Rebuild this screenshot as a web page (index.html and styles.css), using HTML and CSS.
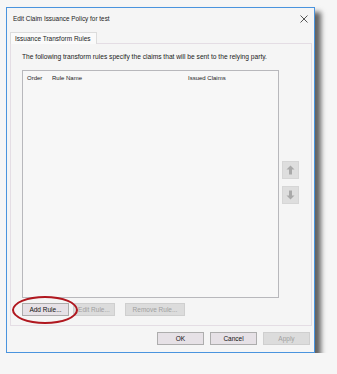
FILE: index.html
```html
<!DOCTYPE html>
<html>
<head>
    <meta charset="UTF-8">
    <title>Edit Claim Issuance Policy</title>
    <link rel="stylesheet" href="styles.css">
</head>
<body>
<div class="dialog">
    <div class="titlebar">
        <span class="title">Edit Claim Issuance Policy for test</span>
        <svg class="close" width="8" height="8" viewBox="0 0 8 8">
            <path d="M0.5 0.5 L7.5 7.5 M7.5 0.5 L0.5 7.5" stroke="#444" stroke-width="0.9"/>
        </svg>
    </div>
    <div class="tabs">
        <div class="tab">Issuance Transform Rules</div>
    </div>
    <div class="panel">
        <p class="intro">The following transform rules specify the claims that will be sent to the relying party.</p>
        <div class="rules">
            <div class="list">
                <div class="cols">
                    <span class="col-order">Order</span>
                    <span class="col-name">Rule Name</span>
                    <span class="col-claims">Issued Claims</span>
                </div>
            </div>
            <div class="arrows">
                <button class="arrow" disabled>
                    <svg width="9" height="10" viewBox="0 0 9 10"><path d="M4.5 0.5 L8.5 4.5 L6 4.5 L6 9.5 L3 9.5 L3 4.5 L0.5 4.5 Z" fill="#a9a9a9"/></svg>
                </button>
                <button class="arrow" disabled>
                    <svg width="9" height="10" viewBox="0 0 9 10"><path d="M4.5 9.5 L8.5 5.5 L6 5.5 L6 0.5 L3 0.5 L3 5.5 L0.5 5.5 Z" fill="#a9a9a9"/></svg>
                </button>
            </div>
        </div>
        <div class="rule-buttons">
            <button class="btn btn-add">Add Rule...</button>
            <button class="btn btn-edit" disabled>Edit Rule...</button>
            <button class="btn btn-remove" disabled>Remove Rule...</button>
        </div>
    </div>
    <div class="footer">
        <button class="btn btn-main">OK</button>
        <button class="btn btn-main">Cancel</button>
        <button class="btn btn-main" disabled>Apply</button>
    </div>
</div>
</body>
</html>
```

FILE: styles.css
```css
body {
    margin: 0;
    background: #f6f6f6;
    font-family: "Liberation Sans", Arial, sans-serif;
    font-size: 7px;
    color: #1a1a1a;
}

.dialog {
    margin: 7px 0 0 6px;
    width: 307px;
    height: 344px;
    border: 1px solid #4a94de;
    background: #f5f5f5;
    box-shadow: 6px 5px 5px rgba(0, 0, 0, 0.6);
    display: flex;
    flex-direction: column;
}

.titlebar {
    height: 21px;
    display: flex;
    align-items: center;
    justify-content: space-between;
    padding: 0 6px 0 6px;
}

.title {
    font-size: 6.4px;
    color: #222;
}

.tabs {
    display: flex;
    padding: 2px 0 0 3px;
}

.tab {
    height: 11px;
    line-height: 11px;
    padding: 0 5px 0 4px;
    border: 1px solid #dcdcdc;
    border-bottom: none;
    background: #fafafa;
    font-size: 6.5px;
    position: relative;
    top: 1px;
}

.panel {
    box-sizing: border-box;
    margin: 0 2px 0 3px;
    height: 283px;
    border: 1px solid #e4dde4;
    padding: 9px 0 0 11px;
    display: flex;
    flex-direction: column;
}

.intro {
    margin: 0;
    font-size: 6.65px;
    line-height: 8px;
}

.rules {
    display: flex;
    margin-top: 9px;
}

.list {
    width: 255px;
    height: 226px;
    border: 1px solid #b8b8bc;
    background: #f7f7f7;
}

.cols {
    display: flex;
    padding: 4px 0 0 4px;
    font-size: 6px;
}

.col-order {
    width: 25px;
}

.col-name {
    width: 136px;
}

.arrows {
    display: flex;
    flex-direction: column;
    gap: 7px;
    margin: 91px 0 0 3px;
}

.arrow {
    width: 17px;
    height: 18px;
    padding: 0;
    border: 1px solid #d6d6d6;
    background: #dedede;
    display: flex;
    align-items: center;
    justify-content: center;
}

.rule-buttons {
    display: flex;
    gap: 4px;
    margin-top: 5px;
    position: relative;
}

.btn {
    height: 13px;
    padding: 0;
    font-family: "Liberation Sans", Arial, sans-serif;
    font-size: 6.5px;
    border: 1px solid #adadad;
    background: #e6e1e6;
    color: #111;
}

.btn:disabled {
    border-color: #cfcfcf;
    background: #dcdcdc;
    color: #a0a0a0;
}

.btn-add {
    width: 47px;
}

.btn-add::after {
    content: "";
    position: absolute;
    left: -10px;
    top: -7px;
    width: 62px;
    height: 24px;
    border: 2.5px solid #b0171f;
    border-radius: 50%;
}

.btn-edit {
    width: 42px;
}

.btn-remove {
    width: 60px;
    margin-left: 6px;
}

.footer {
    display: flex;
    justify-content: flex-end;
    gap: 6px;
    padding: 6px 4px 0 0;
}

.btn-main {
    width: 47px;
}
```
